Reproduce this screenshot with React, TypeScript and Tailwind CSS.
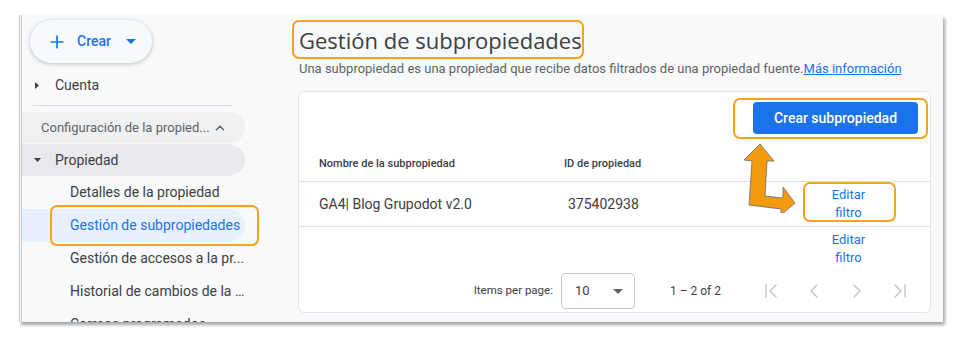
import { ChevronFirst, ChevronLast, ChevronLeft, ChevronRight, ChevronUp, Plus } from "lucide-react"

const font = { fontFamily: "Roboto, 'Liberation Sans', sans-serif" }

const NavItem = ({ label, active }: { label: string; active?: boolean }) => (
  <div
    className={`h-[33px] w-[223px] shrink-0 flex items-center pl-[48px] rounded-r-full text-[14px] ${
      active ? "bg-[#e8f0fe] text-[#1a73e8]" : "text-[#3c4043]"
    }`}
  >
    <span className="truncate">{label}</span>
  </div>
)

const Arrow = () => (
  <svg width="60" height="72" viewBox="0 0 60 72" className="absolute left-[738px] top-[141px]">
    <polygon
      points="22,3 36,20 29,20 27,55 45,57 45,46 57,62 43,74 43,68 11,64 14,20 6,19"
      fill="#f39a0f"
      stroke="#6b6b6b"
      strokeWidth="0.8"
      strokeLinejoin="round"
    />
  </svg>
)

export default function App() {
  return (
    <div className="w-[968px] h-[348px] bg-white relative overflow-hidden" style={font}>
      {/* framed screenshot */}
      <div className="absolute left-[19px] top-[15px] w-[924px] h-[307px] bg-[#f8f9fa] border-l-[3px] border-double border-[#c8c8c8] shadow-[2px_3px_3px_rgba(0,0,0,0.35)] overflow-hidden flex">
        {/* sidebar */}
        <div className="w-[246px] shrink-0 flex flex-col relative">
          <div className="pl-[8px] pt-[5px] shrink-0">
            <div className="w-[122px] h-[43px] rounded-full bg-[#f6f9fe] shadow-[0_1px_4px_rgba(0,0,0,0.25)] flex items-center pl-[17px] text-[#1a73e8]">
              <Plus size={20} strokeWidth={2} />
              <span className="ml-[10px] text-[14px] font-medium">Crear</span>
              <svg width="10" height="5" viewBox="0 0 10 5" className="ml-[15px]">
                <polygon points="0,0 10,0 5,5" fill="#1a73e8" />
              </svg>
            </div>
          </div>

          <div className="h-[32px] shrink-0 mt-[6px] flex items-center pl-[13px] text-[14px] text-[#3c4043]">
            <svg width="4" height="7" viewBox="0 0 4 7" className="mr-[16px]">
              <polygon points="0,0 4,3.5 0,7" fill="#3c4043" />
            </svg>
            Cuenta
          </div>

          <div className="ml-[11px] w-[200px] h-px shrink-0 bg-[#dadce0] mt-[4px]" />

          <div className="mt-[6px] h-[31px] w-[223px] shrink-0 rounded-r-full bg-[#eef0f2] flex items-center pl-[19px] text-[13px] text-[#5f6368]">
            <span>Configuración de la propied...</span>
            <ChevronUp size={14} strokeWidth={2.5} className="ml-[3px]" />
          </div>

          <div className="mt-[1px] h-[32px] w-[223px] shrink-0 rounded-r-full bg-[#e8eaed] flex items-center pl-[12px] text-[14px] text-[#3c4043]">
            <svg width="7" height="4" viewBox="0 0 7 4" className="mr-[14px]">
              <polygon points="0,0 7,0 3.5,4" fill="#3c4043" />
            </svg>
            Propiedad
          </div>

          <NavItem label="Detalles de la propiedad" />
          <NavItem label="Gestión de subpropiedades" active />
          <NavItem label="Gestión de accesos a la pr..." />
          <NavItem label="Historial de cambios de la ..." />
          <NavItem label="Correos programados" />

          {/* annotation */}
          <div className="absolute left-[28px] top-[190px] w-[209px] h-[41px] rounded-[7px] border-2 border-[#f7a21b]" />
        </div>

        {/* main */}
        <div className="flex-1 flex flex-col pl-[31px] pr-[12px] relative">
          <div className="mt-[5px] self-start relative shrink-0">
            <div className="h-[39px] w-[292px] rounded-[7px] border-2 border-[#f7a21b] -ml-[7px] flex items-center pl-[5px]">
              <h1 className="text-[22px] text-[#3c4043] leading-none" style={{ fontFamily: "'Open Sans', Roboto, sans-serif" }}>
                Gestión de subpropiedades
              </h1>
            </div>
          </div>
          <p className="text-[13px] text-[#5f6368] mt-[1px] leading-[18px] shrink-0">
            Una subpropiedad es una propiedad que recibe datos filtrados de una propiedad fuente.
            <span className="text-[#1a73e8] underline">Más información</span>
          </p>

          <div className="mt-[13px] -ml-[1px] w-[633px] h-[222px] shrink-0 bg-white rounded-[6px] border border-[#e3e5e8] flex flex-col">
            <div className="flex justify-end pt-[10px] pr-[12px] shrink-0">
              <button className="h-[32px] w-[165px] rounded-[4px] bg-[#1a73e8] text-white text-[14px] font-medium">
                Crear subpropiedad
              </button>
            </div>

            <div className="flex items-center h-[47px] pt-[14px] shrink-0 text-[11px] font-medium text-[#3c4043]">
              <div className="w-[265px] pl-[20px]">Nombre de la subpropiedad</div>
              <div>ID de propiedad</div>
            </div>

            <div className="flex items-center h-[46px] shrink-0 border-t border-b border-[#e0e0e0] text-[14px] text-[#3c4043]">
              <div className="w-[269px] pl-[20px]">GA4| Blog Grupodot v2.0</div>
              <div className="w-[233px]">375402938</div>
              <div className="w-[95px] text-center text-[#1a73e8] text-[13px] leading-[18px]">
                Editar
                <br />
                filtro
              </div>
            </div>

            <div className="flex h-[40px] shrink-0 items-start pt-[4px] text-[13px] leading-[18px]">
              <div className="w-[502px]" />
              <div className="w-[95px] text-center text-[#1a73e8]">
                Editar
                <br />
                filtro
              </div>
            </div>

            <div className="flex items-center justify-end h-[40px] shrink-0 mt-[4px] pr-[18px] text-[12px] text-[#3c4043]">
              <span className="text-[11.5px]">Items per page:</span>
              <div className="ml-[8px] w-[74px] h-[36px] rounded-[4px] border border-[#c4c7c5] flex items-center justify-between pl-[13px] pr-[11px] text-[13px]">
                <span>10</span>
                <svg width="10" height="5" viewBox="0 0 10 5">
                  <polygon points="0,0 10,0 5,5" fill="#5f6368" />
                </svg>
              </div>
              <span className="ml-[35px] mr-[38px]">1 – 2 of 2</span>
              <div className="flex items-center gap-[19px] text-[#c4c7c5]">
                <ChevronFirst size={24} strokeWidth={1.5} />
                <ChevronLeft size={24} strokeWidth={1.5} />
                <ChevronRight size={24} strokeWidth={1.5} />
                <ChevronLast size={24} strokeWidth={1.5} />
              </div>
            </div>
          </div>
        </div>
      </div>

      {/* annotations over the main panel */}
      <div className="absolute left-[733px] top-[98px] w-[195px] h-[41px] rounded-[7px] border-2 border-[#f7a21b]" />
      <div className="absolute left-[803px] top-[182px] w-[93px] h-[40px] rounded-[7px] border-2 border-[#f7a21b]" />
      <Arrow />
    </div>
  )
}
